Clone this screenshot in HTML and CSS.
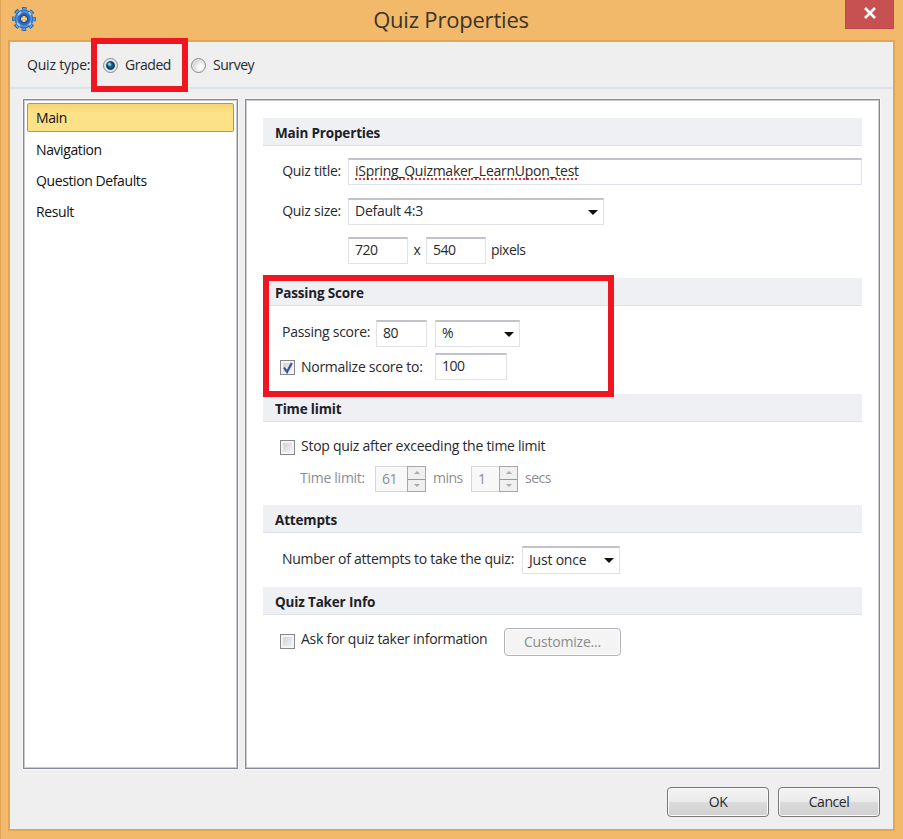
FILE: index.html
```html
<!DOCTYPE html>
<html lang="en">
<head>
<meta charset="utf-8">
<title>Quiz Properties</title>
<link rel="stylesheet" href="styles.css">
</head>
<body>
<div class="window">
  <header class="titlebar">
    <svg class="gear" viewBox="0 0 24 24" width="24" height="24">
      <circle cx="12" cy="12" r="9.9" fill="none" stroke="#315c96" stroke-width="4" stroke-dasharray="4.4 3.375" stroke-dashoffset="2.2"/>
      <circle cx="12" cy="12" r="9.2" fill="none" stroke="#60a5ee" stroke-width="3.4" stroke-dasharray="3 4.226" stroke-dashoffset="1.5"/>
      <circle cx="12" cy="12" r="6.3" fill="none" stroke="#2c68bd" stroke-width="6.2"/>
      <circle cx="12" cy="12" r="7.3" fill="none" stroke="#4a8ce0" stroke-width="2.2"/>
      <path d="M6 8l3-3M17 5l2 3M5 16l3 3M17 18l2-2" stroke="#9ccafa" stroke-width="1.8"/>
      <circle cx="12" cy="12" r="4.4" fill="#244f88"/>
      <path d="M12 9v6M9 12h6" stroke="#f5c879" stroke-width="2.8"/>
    </svg>
    <h1>Quiz Properties</h1>
    <button class="close" aria-label="Close"><svg width="14" height="12" viewBox="0 0 14 12"><path d="M2 1l10 10M12 1L2 11" stroke="#fff" stroke-width="2.6"/></svg></button>
  </header>
  <main class="client">
    <div class="type-bar">
      <span class="type-label">Quiz type:</span>
      <label class="option option-on"><i class="radio checked"></i><span>Graded</span></label>
      <label class="option"><i class="radio"></i><span>Survey</span></label>
    </div>
    <div class="panels">
      <nav class="menu">
        <div class="item selected">Main</div>
        <div class="item">Navigation</div>
        <div class="item">Question Defaults</div>
        <div class="item">Result</div>
      </nav>
      <div class="content">
        <section class="s-main">
          <h2>Main Properties</h2>
          <div class="row r-title"><span class="lbl">Quiz title:</span><div class="field grow"><span class="misspelt">iSpring_Quizmaker_LearnUpon_test</span></div></div>
          <div class="row r-size"><span class="lbl">Quiz size:</span><div class="field select w256">Default 4:3<i class="arrow"></i></div></div>
          <div class="row r-dim"><div class="field w60">720</div><span class="times">x</span><div class="field w60">540</div><span class="after">pixels</span></div>
        </section>
        <section class="s-pass">
          <h2>Passing Score</h2>
          <div class="row r-pass"><span class="lbl-pass">Passing score:</span><div class="field w51">80</div><div class="field select w85">%<i class="arrow"></i></div></div>
          <div class="row r-norm"><i class="check"><svg width="12" height="12" viewBox="0 0 12 12"><path d="M2 5.5l3 4.5L9.8 1" fill="none" stroke="#3b529b" stroke-width="2.2"/></svg></i><span class="lbl-norm">Normalize score to:</span><div class="field w72">100</div></div>
          <div class="marker marker-pass"></div>
        </section>
        <section class="s-time">
          <h2>Time limit</h2>
          <div class="row r-stop"><i class="check"></i><span class="lbl-stop">Stop quiz after exceeding the time limit</span></div>
          <div class="row r-limit"><span class="lbl-limit">Time limit:</span>
            <div class="spin w51">61<span class="steps"><i class="up"></i><i class="down"></i></span></div><span class="mins">mins</span>
            <div class="spin w47">1<span class="steps"><i class="up"></i><i class="down"></i></span></div><span class="secs">secs</span></div>
        </section>
        <section class="s-att">
          <h2>Attempts</h2>
          <div class="row r-att"><span class="lbl-att">Number of attempts to take the quiz:</span><div class="field select w98">Just once<i class="arrow"></i></div></div>
        </section>
        <section class="s-info">
          <h2>Quiz Taker Info</h2>
          <div class="row r-info"><i class="check"></i><span class="lbl-info">Ask for quiz taker information</span><button class="btn customize" disabled>Customize...</button></div>
        </section>
      </div>
    </div>
    <footer><button class="btn">OK</button><button class="btn">Cancel</button></footer>
    <div class="marker marker-type"></div>
  </main>
</div>
</body>
</html>
```
FILE: styles.css
```css
* { box-sizing: border-box; }
body { margin: 0; font: 14px/20px "Open Sans", "Noto Sans", sans-serif; letter-spacing: -.27px; color: #28292d; background: #f3b96b; }
.window { width: 903px; height: 839px; padding: 0 9px; border-left: 1px solid #dfa558; overflow: hidden; white-space: nowrap; }
.titlebar { height: 41px; display: flex; padding-left: 2px; }
.gear { margin-top: 7px; flex: none; }
h1 { flex: 1; margin: 8px 0 0; text-align: center; font-size: 22px; line-height: 22px; font-weight: 400; color: #3a3428; letter-spacing: -.2px; padding-left: 21px; }
.close { width: 49px; height: 29px; border: 1px solid #bd4946; border-top: 0; background: #c75050; padding: 0; display: flex; align-items: center; justify-content: center; padding-bottom: 3px; }
.client { position: relative; width: 885px; height: 789px; margin-left: -1px; background: #efefef; border: 1px solid #c5ad86; box-shadow: 0 0 0 1px #dea653; display: flex; flex-direction: column; }
.type-bar { height: 47px; border-bottom: 2px solid #dce3ec; display: flex; align-items: center; padding: 1px 0 0 17px; letter-spacing: -.45px; }
.type-label { width: 76px; letter-spacing: -.2px; }
.option { width: 88px; display: flex; align-items: center; gap: 7px; }
.radio { width: 15px; height: 15px; border-radius: 50%; border: 1px solid #888b8e; background: radial-gradient(circle at 65% 65%, #fbfbfb 20%, #c8cbce 75%); box-shadow: inset 0 0 0 1px #eee; }
.radio.checked { background: radial-gradient(circle at 42% 40%, #8fe0f6 0 6%, transparent 22%), radial-gradient(circle, #176f9c 0 12%, #0c3455 42%, #d8dde0 52%); }
.panels { display: flex; gap: 7px; margin: 10px 13px 0; height: 670px; }
.menu { width: 215px; border: 1px solid #858991; background: #fff; padding: 3px; color: #111; letter-spacing: -.4px; box-shadow: inset 0 0 0 1px #c9cbd0, 0 0 0 1px #f8f8f8; }
.item { height: 31px; line-height: 31px; padding-left: 9px; }
.item.selected { height: 29px; line-height: 28px; padding-left: 8px; margin-bottom: 2px; border: 1px solid #c39140; border-radius: 2px; background: linear-gradient(#f7d474, #fde28a 35%, #fde185); }
.content { flex: 1; border: 1px solid #858991; background: #fff; padding: 18px 17px 0; box-shadow: inset 0 0 0 1px #c9cbd0, 0 0 0 1px #f8f8f8; }
.s-main { height: 160px; }
.s-pass { height: 116px; position: relative; }
.s-time { height: 111px; }
.s-att { height: 82px; }
h2 { margin: 0; height: 28px; padding-left: 12px; font-size: 13.5px; line-height: 30px; font-weight: 700; letter-spacing: -.17px; background: #eff0f4; border-bottom: 1px solid #dfe1e8; color: #202126; }
.row { display: flex; align-items: center; height: 27px; padding-left: 19px; }
.row > span { position: relative; top: -1px; }
.r-title { margin-top: 12px; }
.r-size { margin-top: 13px; }
.r-dim { margin-top: 12px; padding-left: 85px; }
.lbl { width: 66px; text-align: right; padding-right: 7px; }
.field { height: 27px; border: 1px solid #dfe2ea; border-top: 2px solid #c2c3c9; background: #fff; padding-left: 6px; line-height: 22px; }
.r-dim .field, .r-pass .field, .r-norm .field { letter-spacing: -.5px; }
.grow { flex: 1; }
.misspelt { text-decoration: underline dotted #e33 2px; text-underline-offset: 2px; text-decoration-skip-ink: none; }
.select { position: relative; }
.arrow { position: absolute; right: 5px; top: 10px; border: 5px solid transparent; border-top-color: #111; border-bottom: 0; }
.w256 { width: 256px; } .w60 { width: 60px; } .w51 { width: 51px; } .w85 { width: 85px; margin-left: 8px; } .w72 { width: 72px; } .w47 { width: 47px; } .w98 { width: 98px; height: 28px; line-height: 24px; letter-spacing: -.2px; }
.times { width: 18px; text-align: center; }
.after { margin-left: 5px; letter-spacing: -.5px; }
.r-pass { margin-top: 14px; }
.row > .lbl-pass { width: 94px; top: -2px; }
.r-norm { margin-top: 6px; padding-left: 17px; }
.check { flex: none; width: 15px; height: 15px; border: 1px solid #85878b; background: linear-gradient(135deg, #c9ccd2, #f8f8f8); box-shadow: inset 0 0 0 2px #f5f5f5; display: flex; align-items: center; justify-content: center; margin-right: 6px; position: relative; top: 1px; }
.lbl-norm { width: 134px; padding-top: 2px; }
.marker { position: absolute; border: 6px solid #ee1620; pointer-events: none; }
.marker-pass { left: 0; top: -3px; width: 351px; height: 122px; }
.marker-type { left: 81px; top: -4px; width: 97px; height: 54px; }
.r-stop { margin-top: 11px; padding-left: 17px; }
.r-limit { margin-top: 5px; padding-left: 37px; color: #8c8d91; }
.lbl-limit { width: 75px; }
.spin { height: 26px; display: flex; justify-content: space-between; border: 1px solid #d6d6d9; background: #f8f8f8; padding-left: 6px; line-height: 23px; letter-spacing: -.5px; }
.steps { width: 19px; height: 26px; margin: -1px -1px 0 0; border: 1px solid #a8a8a8; background: #f0f0f0; display: grid; grid-template-rows: 1fr 1fr; }
.steps i { display: flex; align-items: center; justify-content: center; }
.steps i + i { border-top: 1px solid #999; }
.up::before, .down::before { content: ""; border: 3.5px solid transparent; }
.up::before { border-bottom-color: #aaa; border-top: 0; }
.down::before { border-top-color: #aaa; border-bottom: 0; }
.mins { width: 45px; padding-left: 7px; letter-spacing: -.5px; }
.secs { padding-left: 7px; letter-spacing: -.5px; }
.r-att { margin-top: 13px; }
.lbl-att { width: 240px; }
.r-info { margin-top: 12px; padding-left: 17px; }
.row > .lbl-info { width: 203px; top: -2px; }
.btn { font: inherit; letter-spacing: -.45px; color: #28292d; width: 102px; height: 30px; padding: 0; border: 1px solid #777; border-radius: 4px; background: linear-gradient(#f3f3f3, #ebebeb 48%, #dadada 52%, #d1d1d1); box-shadow: inset 0 0 0 1px #fbfbfb; }
.customize { width: 117px; height: 28px; margin-top: 3px; border-color: #b0b3b7; background: #f4f4f4; color: #8b8b8e; letter-spacing: -.2px; }
footer { display: flex; justify-content: flex-end; gap: 9px; margin: 18px 13px 0; }
```
